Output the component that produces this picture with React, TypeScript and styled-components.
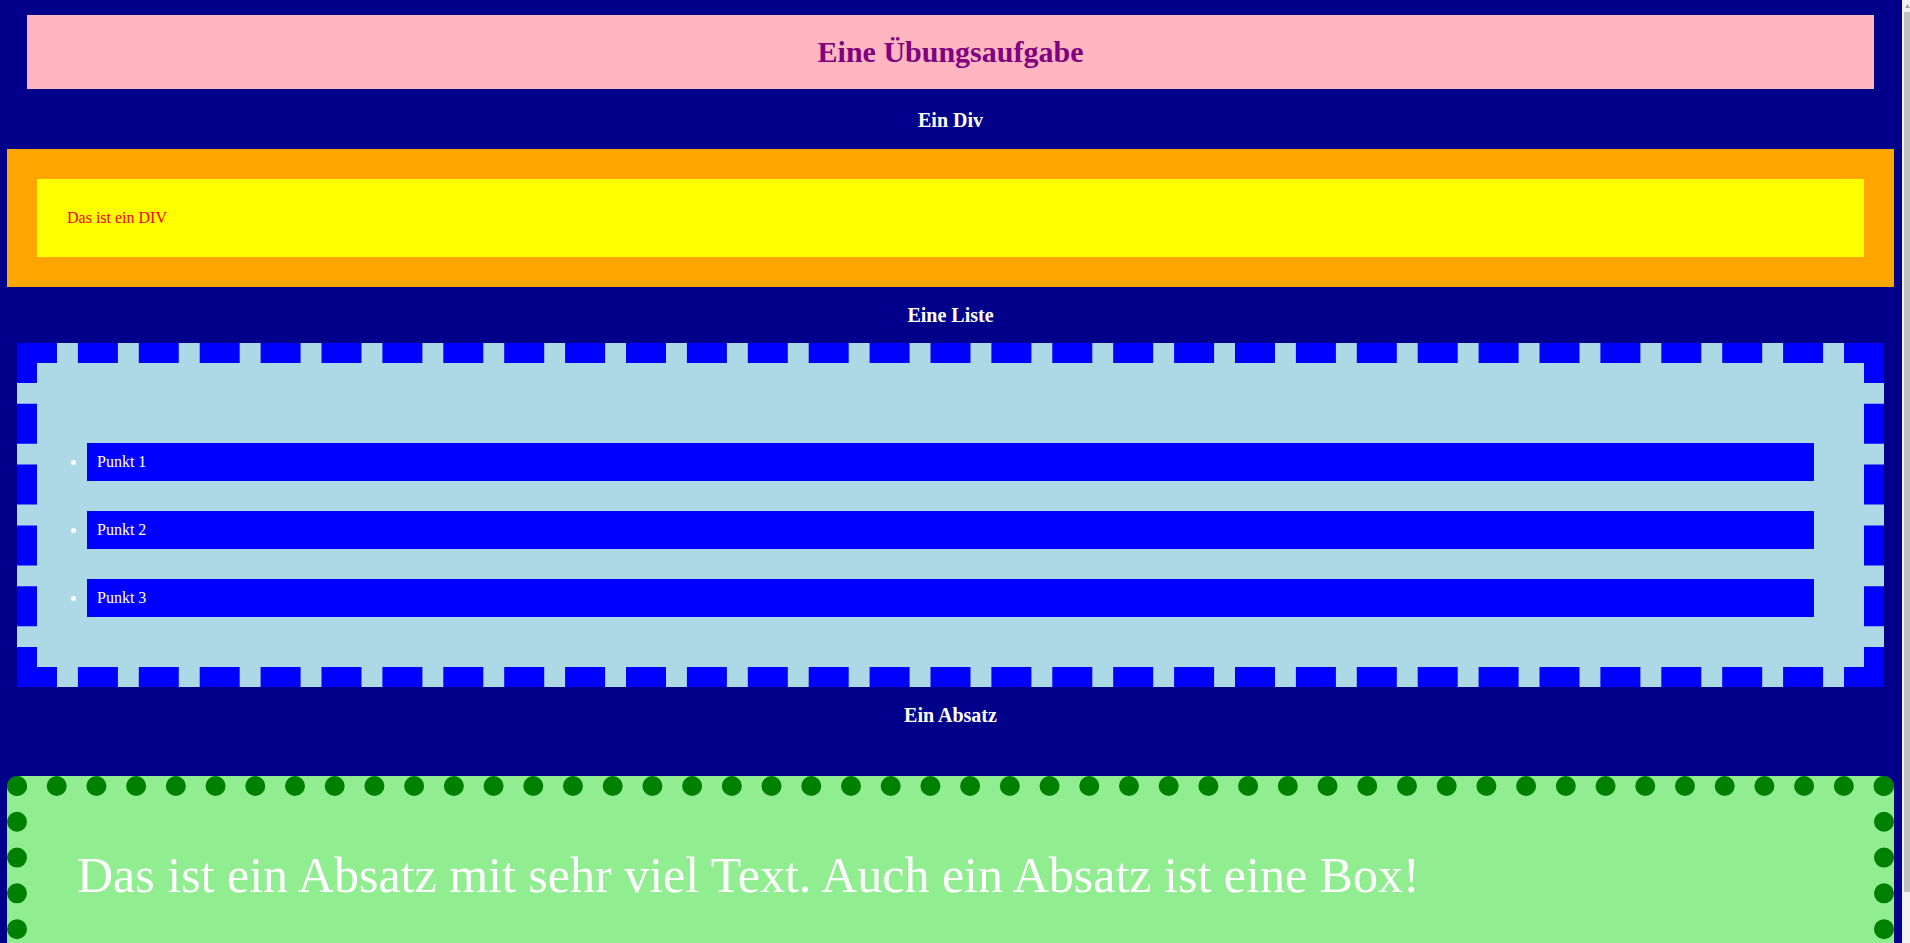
import React from "react";
import styled, { createGlobalStyle } from "styled-components";

const Global = createGlobalStyle`
  html, body {
    margin: 0;
    padding: 0;
    overflow: hidden;
    height: 943px;
    background: #00008b;
  }
  body {
    font-family: "Liberation Serif", "Times New Roman", serif;
    font-size: 16px;
  }
`;

const Frame = styled.div`
  display: flex;
  width: 1910px;
  height: 943px;
  overflow: hidden;
`;

const Page = styled.main`
  width: 1902px;
  flex: none;
  box-sizing: border-box;
  padding: 0 8px 0 7px;
  background: #00008b;
  display: flow-root;
`;

const Header = styled.h1`
  margin: 15px 20px 0 20px;
  padding: 20px 0;
  background: #ffb6c1;
  color: #800080;
  font-size: 30px;
  line-height: 34px;
  font-weight: bold;
  text-align: center;
`;

const SectionTitle = styled.h3<{ $top: number; $bottom: number }>`
  margin: ${(p) => p.$top}px 0 ${(p) => p.$bottom}px 0;
  color: #ffffff;
  font-size: 20px;
  line-height: 23px;
  font-weight: bold;
  text-align: center;
`;

const OuterBox = styled.div`
  background: #ffa500;
  padding: 30px;
`;

const InnerBox = styled.div`
  background: #ffff00;
  color: #ff0000;
  padding: 30px;
  font-size: 16px;
  line-height: 18px;
`;

const List = styled.ul`
  margin: 0 10px;
  padding: 50px;
  background: #add8e6;
  border: 20px dashed #0000ff;
  list-style: disc outside;
  color: #ffffff;
`;

const Item = styled.li`
  margin-top: 30px;
  padding: 10px;
  background: #0000ff;
  color: #ffffff;
  font-size: 16px;
  line-height: 18px;
`;

const Paragraph = styled.p`
  margin: 49px 0 0 0;
  padding: 50px;
  background: #90ee90;
  border: 20px dotted #008000;
  border-radius: 10px;
  color: #ffffff;
  font-size: 50px;
  line-height: 59px;
`;

const Scrollbar = styled.aside`
  width: 8px;
  flex: none;
  display: flex;
  flex-direction: column;
  background: #f1f1f1;
  box-sizing: border-box;
  padding-left: 2px;
`;

const ScrollButton = styled.div`
  height: 12px;
  display: flex;
  align-items: center;
  justify-content: center;
`;

const Thumb = styled.div`
  height: 880px;
  background: #c1c1c1;
`;

export default function App() {
  return (
    <Frame>
      <Global />
      <Page>
        <Header>Eine Übungsaufgabe</Header>
        <SectionTitle $top={20} $bottom={17}>Ein Div</SectionTitle>
        <OuterBox>
          <InnerBox>Das ist ein DIV</InnerBox>
        </OuterBox>
        <SectionTitle $top={17} $bottom={16}>Eine Liste</SectionTitle>
        <List>
          <Item>Punkt 1</Item>
          <Item>Punkt 2</Item>
          <Item>Punkt 3</Item>
        </List>
        <SectionTitle $top={17} $bottom={0}>Ein Absatz</SectionTitle>
        <Paragraph>
          Das ist ein Absatz mit sehr viel Text. Auch ein Absatz ist eine Box!
        </Paragraph>
      </Page>
      <Scrollbar>
        <ScrollButton>
          <svg width="5" height="4" viewBox="0 0 5 4">
            <path d="M0 4 L2.5 0 L5 4 Z" fill="#a3a3a3" />
          </svg>
        </ScrollButton>
        <Thumb />
      </Scrollbar>
    </Frame>
  );
}
